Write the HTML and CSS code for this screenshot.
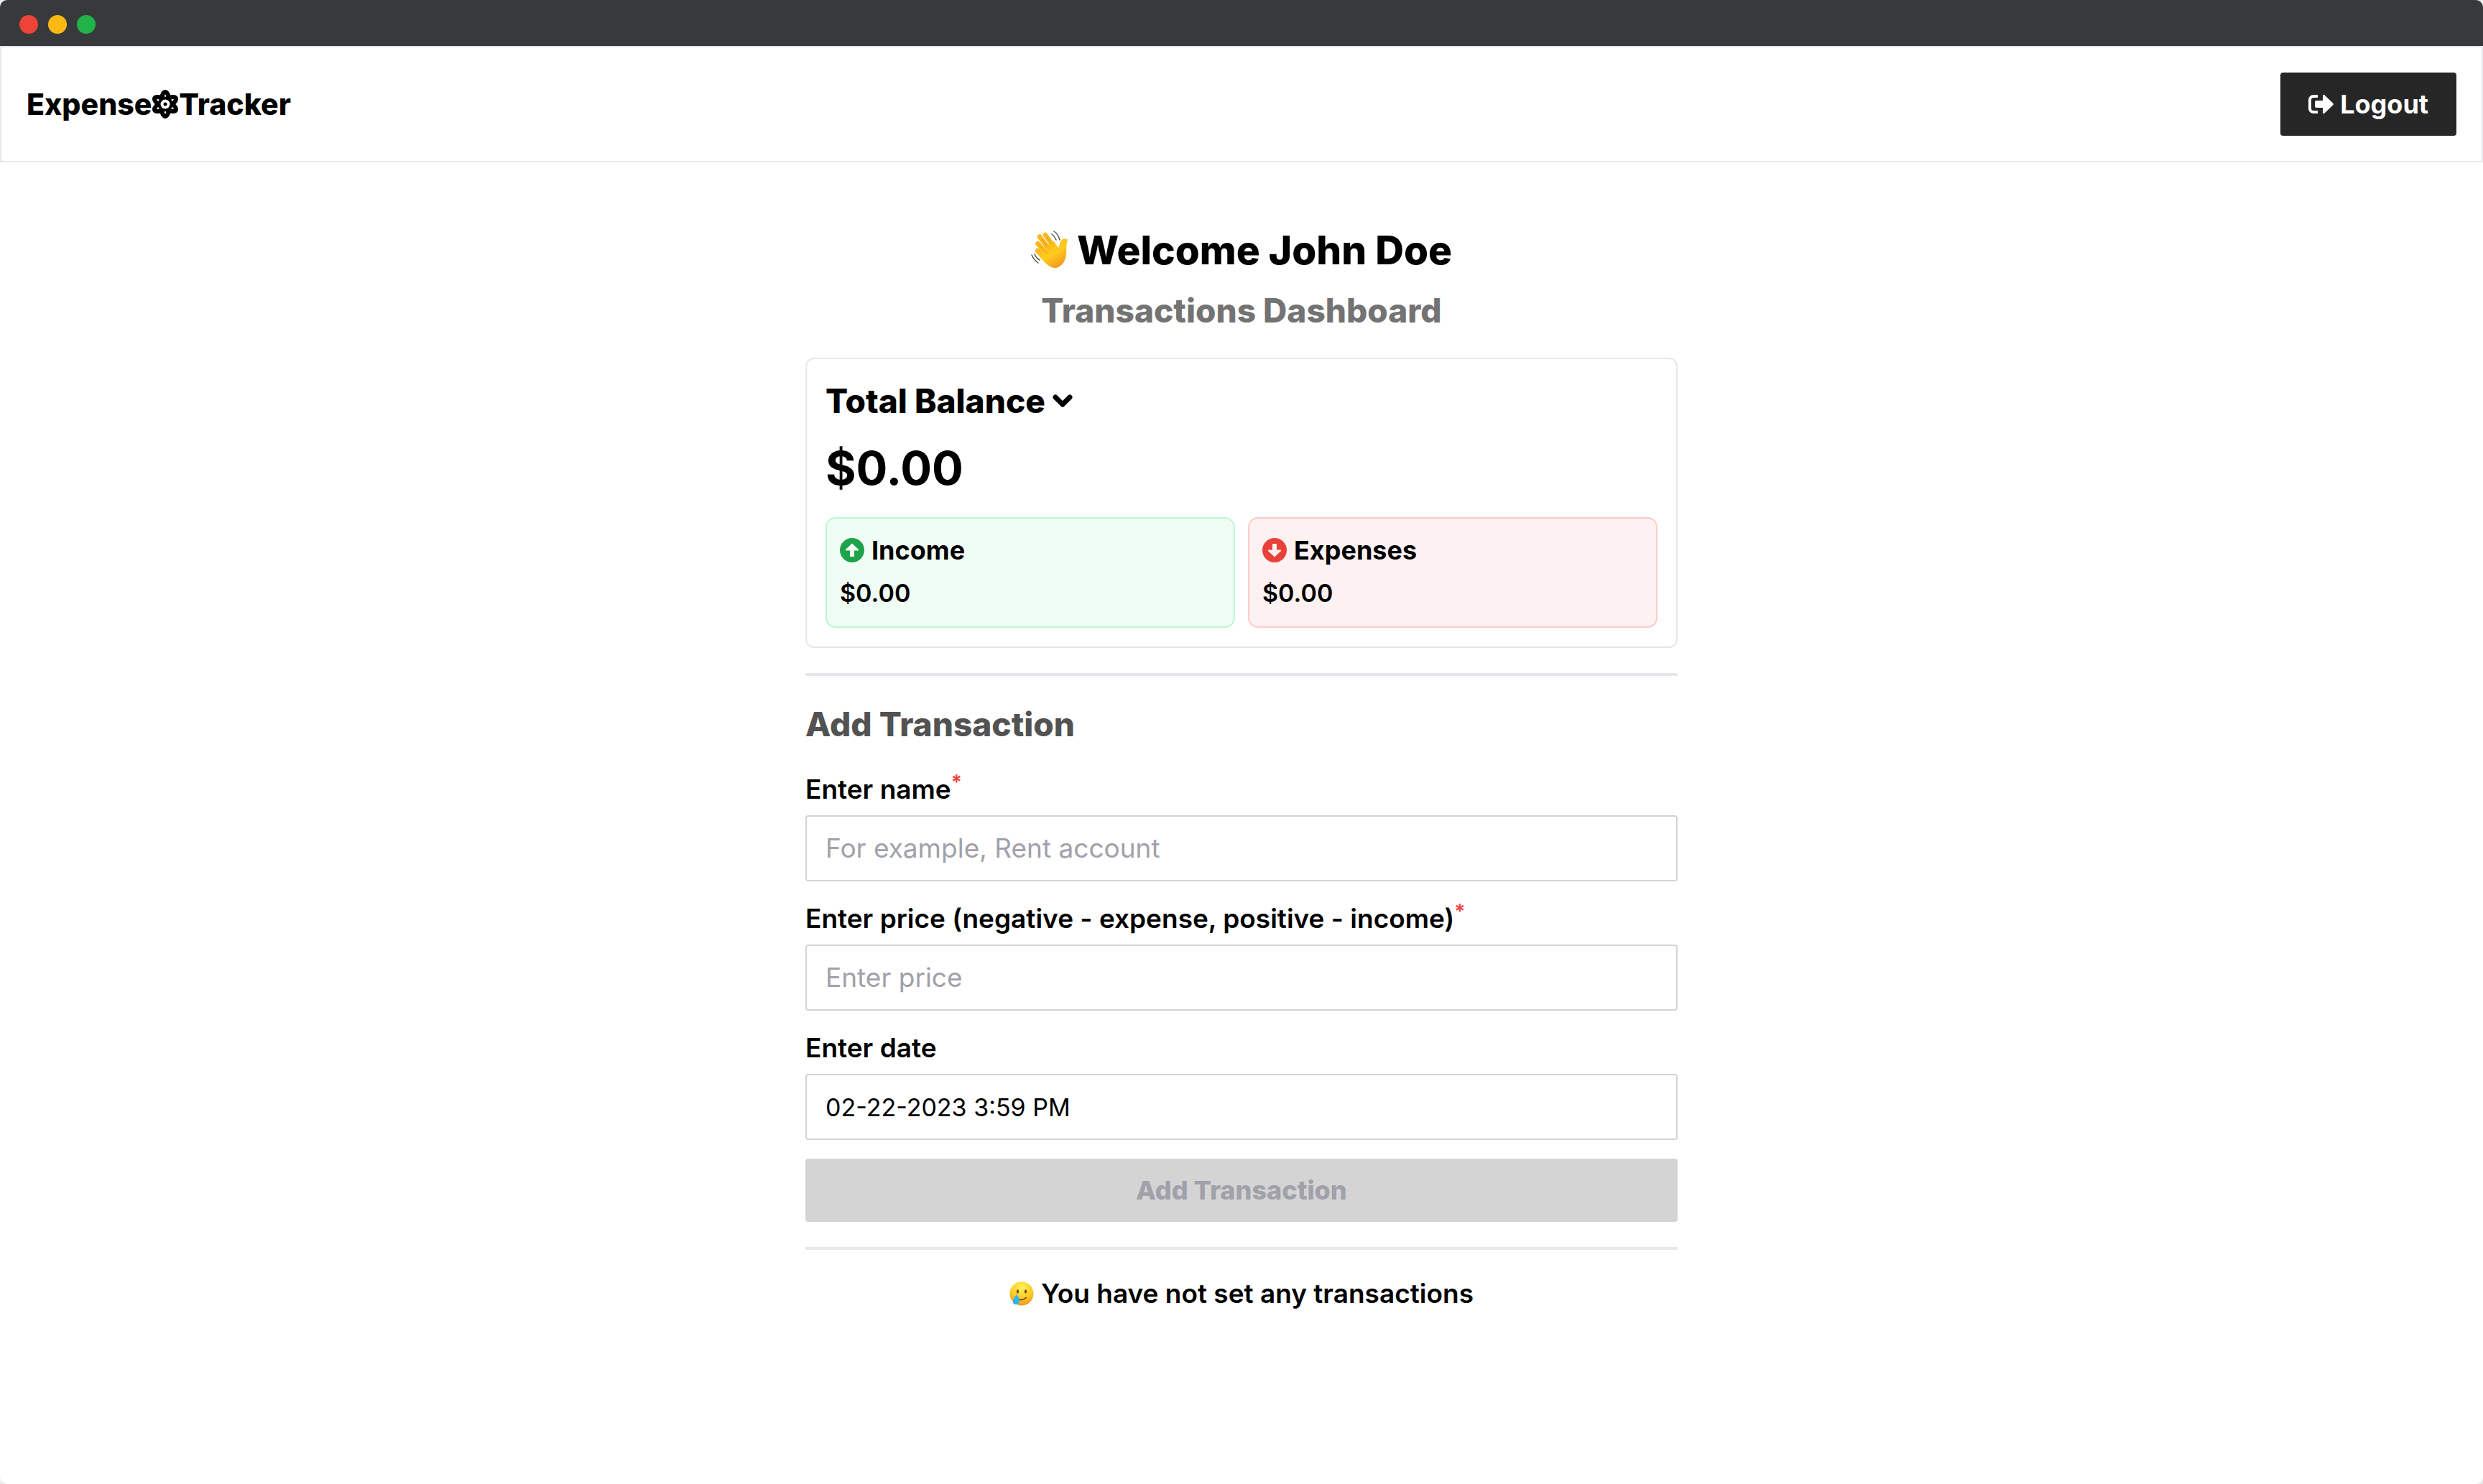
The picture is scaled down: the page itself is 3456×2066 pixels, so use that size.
FILE: index.html
```html
<!DOCTYPE html>
<html lang="en">
<head>
<meta charset="utf-8">
<meta name="viewport" content="width=device-width, initial-scale=1">
<title>Expense Tracker</title>
<link rel="stylesheet" href="styles.css">
</head>
<body>
<div class="window">
  <div class="titlebar">
    <span class="dot dot-close"></span>
    <span class="dot dot-minimize"></span>
    <span class="dot dot-zoom"></span>
  </div>

  <header class="header">
    <a class="logo" href="#">
      <span>Expense</span>
      <svg class="logo-icon" viewBox="0 0 36 40" aria-hidden="true">
        <g fill="none" stroke="#000" stroke-width="6">
          <ellipse cx="18" cy="20" rx="6" ry="17"/>
          <ellipse cx="18" cy="20" rx="6" ry="17" transform="rotate(60 18 20)"/>
          <ellipse cx="18" cy="20" rx="6" ry="17" transform="rotate(-60 18 20)"/>
        </g>
        <circle cx="18" cy="20" r="6.500" fill="#fff"/>
        <circle cx="18" cy="20" r="2.500"/>
      </svg>
      <span>Tracker</span>
    </a>
    <button class="button button-dark" type="button">
      <svg class="logout-icon" viewBox="0 0 36 28" aria-hidden="true">
        <path d="M13 3H7a5 5 0 0 0-5 5v12a5 5 0 0 0 5 5h6" fill="none" stroke="#fff" stroke-width="4"/>
        <path d="M11 9h9V2.500q0-3 2.500-1L34 12.500q1.500 1.500 0 3L22.500 26.500q-2.500 2-2.500-1V19h-9q-2 0-2-2v-6q0-2 2-2z" fill="#fff"/>
      </svg>
      <span>Logout</span>
    </button>
  </header>

  <main class="main">
    <h1 class="welcome">
      <svg class="wave" viewBox="0 0 54 54" aria-hidden="true">
        <defs>
          <linearGradient id="skin" x1="0" y1="0" x2="0.600" y2="1">
            <stop offset="0" stop-color="#f9b21b"/>
            <stop offset="0.600" stop-color="#fecb1e"/>
            <stop offset="1" stop-color="#f59a1c"/>
          </linearGradient>
        </defs>
        <g fill="none" stroke="#fbb71c" stroke-width="6.500" stroke-linecap="round">
          <path d="M12 8.500l13 17M20 6l12 17M9.500 18l13 15M9 28l13 12"/>
        </g>
        <path d="M15 24L32 15l6 9c2-4 2-8 5-11 3-3 9-2 8 1-3 6-1 12-2 19-1 10-6 17-14 19-8 1-16-7-25-18z" fill="url(#skin)"/>
        <path d="M15 12l10 13M22.500 10l9 12M12 21l10 11" fill="none" stroke="#e8930f" stroke-width="1"/>
        <path d="M32 1q6 4 8 12M29 5q4 3 6 8M1 34q3 7 9 11M5 33q2 5 7 8" fill="none" stroke="#555" stroke-width="1.500" stroke-linecap="round"/>
      </svg>
      <span>Welcome John Doe</span>
    </h1>
    <h2 class="subtitle">Transactions Dashboard</h2>

    <section class="balance">
      <h2 class="balance-title">
        <span>Total Balance</span>
        <svg class="chevron" viewBox="0 0 28 20" aria-hidden="true"><path d="M4 5l10 10L24 5" fill="none" stroke="#000" stroke-width="7" stroke-linecap="round" stroke-linejoin="round"/></svg>
      </h2>
      <p class="total">$0.00</p>
      <div class="stats">
        <div class="stat stat-income">
          <h3 class="stat-title">
            <svg class="stat-icon" viewBox="0 0 34 34" aria-hidden="true"><circle cx="17" cy="17" r="17" fill="#1fa34a"/><path d="M17 7.500l9 8.500q.5 1.500-1 1.500h-5V25q0 1-1 1h-4q-1 0-1-1v-7.500H9q-1.500 0-1-1.500z" fill="#f0fdf4"/></svg>
            <span>Income</span>
          </h3>
          <p class="stat-value">$0.00</p>
        </div>
        <div class="stat stat-expenses">
          <h3 class="stat-title">
            <svg class="stat-icon" viewBox="0 0 34 34" aria-hidden="true"><circle cx="17" cy="17" r="17" fill="#e9403a"/><path d="M17 26.500l9-8.500q.5-1.500-1-1.500h-5V9q0-1-1-1h-4q-1 0-1 1v7.500H9q-1.500 0-1 1.500z" fill="#fef2f2"/></svg>
            <span>Expenses</span>
          </h3>
          <p class="stat-value">$0.00</p>
        </div>
      </div>
    </section>

    <hr class="divider">

    <form class="form">
      <h2 class="form-title">Add Transaction</h2>
      <div class="field">
        <label class="label" for="name">Enter name<sup class="required">*</sup></label>
        <input class="input" id="name" type="text" placeholder="For example, Rent account">
      </div>
      <div class="field">
        <label class="label" for="price">Enter price (negative - expense, positive - income)<sup class="required">*</sup></label>
        <input class="input" id="price" type="text" placeholder="Enter price">
      </div>
      <div class="field">
        <label class="label" for="date">Enter date</label>
        <input class="input" id="date" type="text" value="02-22-2023 3:59 PM">
      </div>
      <button class="button button-submit" type="submit" disabled>Add Transaction</button>
    </form>

    <hr class="divider">

    <p class="empty">
      <svg class="face" viewBox="0 0 34 34" aria-hidden="true">
        <defs>
          <radialGradient id="face" cx="0.500" cy="0.250" r="0.800">
            <stop offset="0" stop-color="#fff35c"/>
            <stop offset="0.600" stop-color="#fcc81f"/>
            <stop offset="1" stop-color="#f08a1c"/>
          </radialGradient>
        </defs>
        <circle cx="17" cy="17" r="16.500" fill="url(#face)"/>
        <ellipse cx="11.500" cy="14" rx="1.700" ry="2.800" fill="#7d4a14"/>
        <ellipse cx="22.500" cy="14" rx="1.700" ry="2.800" fill="#7d4a14"/>
        <path d="M13 25q6 2 10-2.500" fill="none" stroke="#7d4a14" stroke-width="1.800" stroke-linecap="round"/>
        <path d="M10 18q6 8 3.500 12-3.500 4-8 1-2.500-4 4.500-13z" fill="#2fb4ee"/>
      </svg>
      <span>You have not set any transactions</span>
    </p>
  </main>
</div>
</body>
</html>
```

FILE: styles.css
```css
* {
  box-sizing: border-box;
}

body,
h1,
h2,
h3,
p {
  margin: 0;
}

body {
  background: #e8e8e8;
  color: #000;
  font-family: Inter, "Open Sans", sans-serif;
  font-size: 34px;
  line-height: 52px;
}

svg {
  display: block;
  flex: none;
}

.window {
  min-height: 100vh;
  overflow: hidden;
  border-radius: 10px;
  background: #fff;
}

.titlebar {
  display: flex;
  align-items: center;
  gap: 14px;
  height: 64px;
  padding: 4px 27px 0;
  background: #38393b;
}

.dot {
  width: 26px;
  height: 26px;
  border-radius: 50%;
}

.dot-close {
  background: #ee4438;
}

.dot-minimize {
  background: #fdb913;
}

.dot-zoom {
  background: #20b348;
}

.header {
  display: flex;
  align-items: center;
  justify-content: space-between;
  padding: 35px;
  border: 2px solid #e5e7eb;
}

.logo {
  display: flex;
  align-items: center;
  gap: 1px;
  color: inherit;
  font-size: 41px;
  font-weight: 800;
  text-decoration: none;
}

.logo-icon {
  width: 36px;
  height: 40px;
}

.button {
  display: flex;
  align-items: center;
  justify-content: center;
  gap: 8px;
  height: 88px;
  padding: 0 39px;
  border: 0;
  border-radius: 4px;
  font: inherit;
  font-size: 36px;
  font-weight: 700;
}

.button-dark {
  background: #262626;
  color: #fff;
}

.logout-icon {
  width: 36px;
  height: 28px;
}

.main {
  width: 100%;
  max-width: 1214px;
  margin: 0 auto;
  padding: 84px 0;
}

.welcome {
  display: flex;
  align-items: center;
  justify-content: center;
  gap: 10px;
  font-size: 55px;
  font-weight: 800;
  line-height: 76px;
}

.wave {
  width: 54px;
  height: 54px;
}

.subtitle {
  margin-top: 12px;
  color: #737373;
  font-size: 46px;
  font-weight: 800;
  line-height: 68px;
  text-align: center;
}

.balance {
  margin-top: 32px;
  padding: 26px;
  border: 2px solid #e5e7eb;
  border-radius: 12px;
}

.balance-title {
  display: flex;
  align-items: center;
  gap: 10px;
  font-size: 46px;
  font-weight: 800;
  line-height: 64px;
}

.chevron {
  width: 28px;
  height: 20px;
}

.total {
  margin-top: 12px;
  font-size: 65px;
  font-weight: 700;
  line-height: 100px;
}

.stats {
  display: grid;
  grid-template-columns: 1fr 1fr;
  gap: 18px;
  margin-top: 18px;
}

.stat {
  padding: 18px 18px 20px;
  border: 2px solid;
  border-radius: 14px;
}

.stat-income {
  border-color: #bbf7d0;
  background: #f0fdf4;
}

.stat-expenses {
  border-color: #fecaca;
  background: #fdf1f1;
}

.stat-title {
  display: flex;
  align-items: center;
  gap: 10px;
  font-size: 36px;
  font-weight: 700;
}

.stat-icon {
  width: 34px;
  height: 34px;
}

.stat-value {
  margin-top: 8px;
  font-weight: 600;
}

.divider {
  height: 4px;
  margin: 35px 0;
  border: 0;
  background: #e5e7eb;
}

.form-title {
  margin-bottom: 33px;
  color: #525252;
  font-size: 46px;
  font-weight: 800;
  line-height: 64px;
}

.field {
  margin-bottom: 26px;
}

.label {
  display: block;
  margin-bottom: 10px;
  font-size: 37px;
  font-weight: 600;
}

.required {
  color: #ef4444;
  font-size: 28px;
  line-height: 0;
}

.input {
  display: block;
  width: 100%;
  height: 92px;
  padding: 0 26px;
  border: 2px solid #d4d4d4;
  border-radius: 4px;
  background: #fff;
  color: #000;
  font: inherit;
}

.input::placeholder {
  color: #a1a1aa;
  font-size: 37px;
  opacity: 1;
}

.button-submit {
  width: 100%;
  background: #d4d4d4;
  color: #a1a1aa;
  font-weight: 800;
}

.empty {
  display: flex;
  align-items: center;
  justify-content: center;
  gap: 10px;
  font-size: 37px;
  font-weight: 600;
}

.face {
  width: 34px;
  height: 34px;
}
```
